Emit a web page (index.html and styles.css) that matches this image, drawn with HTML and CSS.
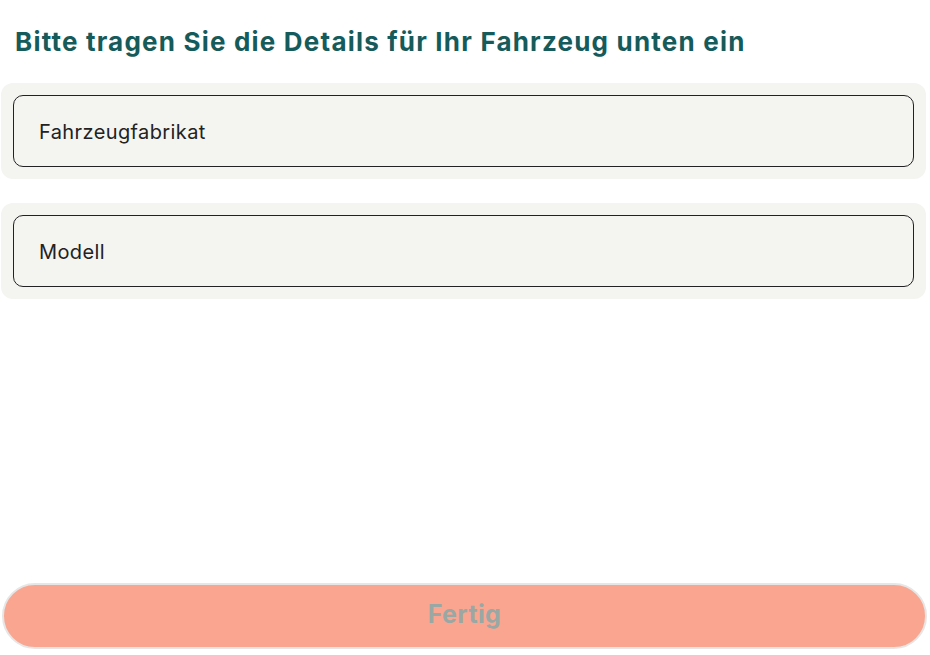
FILE: index.html
```html
<!DOCTYPE html>
<html lang="de">
<head>
    <meta charset="UTF-8">
    <meta name="viewport" content="width=device-width, initial-scale=1.0">
    <title>Fahrzeugdetails</title>
    <link rel="stylesheet" href="styles.css">
</head>
<body>
    <form class="vehicle-form">
        <h1 class="form-title">Bitte tragen Sie die Details für Ihr Fahrzeug unten ein</h1>

        <div class="field-group">
            <div class="field">
                <input type="text" class="field-input" placeholder="Fahrzeugfabrikat">
            </div>
            <div class="field">
                <input type="text" class="field-input" placeholder="Modell">
            </div>
        </div>

        <div class="form-actions">
            <button type="button" class="submit-btn" disabled>Fertig</button>
        </div>
    </form>
</body>
</html>
```

FILE: styles.css
```css
* {
    box-sizing: border-box;
}

body {
    margin: 0;
    font-family: 'Inter', 'Open Sans', sans-serif;
    background-color: #ffffff;
}

.vehicle-form {
    display: flex;
    flex-direction: column;
    height: 655px;
    padding: 0 4px 6px 1px;
}

.form-title {
    margin: 0;
    padding: 25px 0 0 14px;
    font-size: 26px;
    font-weight: 700;
    line-height: 34px;
    letter-spacing: 1.2px;
    color: #155b5b;
}

.field-group {
    display: flex;
    flex-direction: column;
    gap: 24px;
    margin-top: 24px;
}

.field {
    background-color: #f4f4f1;
    border-radius: 12px;
    padding: 12px;
}

.field-input {
    display: block;
    width: 100%;
    height: 72px;
    padding: 2px 25px 0;
    font-family: inherit;
    font-size: 20px;
    font-weight: 400;
    letter-spacing: 0.4px;
    color: #222;
    background-color: #f4f4f1;
    border: 1px solid #222;
    border-radius: 10px;
    outline: none;
}

.field-input::placeholder {
    color: #222;
    opacity: 1;
}

.form-actions {
    margin-top: auto;
}

.submit-btn {
    display: block;
    width: 100%;
    height: 66px;
    margin-left: 1px;
    padding: 0 0 4px;
    font-family: inherit;
    font-size: 25px;
    font-weight: 700;
    letter-spacing: 0.4px;
    color: #9aa8a5;
    background-color: #f9a58f;
    border: 2px solid #e6e6e6;
    border-radius: 33px;
}
```
